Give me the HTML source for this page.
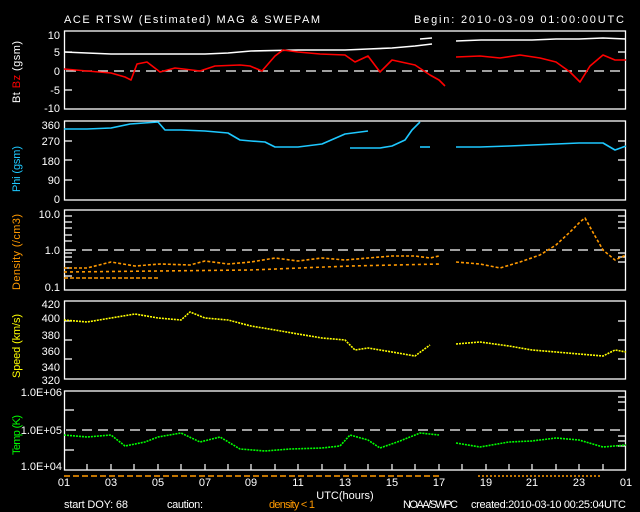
<!DOCTYPE html>
<html><head><style>
body{margin:0;background:#000;width:640px;height:512px;overflow:hidden}
svg{display:block}
text{font-family:"Liberation Sans",sans-serif;font-size:11px;fill:#fff}
</style></head><body>
<svg width="640" height="512" viewBox="0 0 640 512">
<text x="64" y="23" font-size="13" textLength="256">ACE RTSW (Estimated) MAG &amp; SWEPAM</text>
<text x="414" y="23" font-size="13" textLength="210">Begin: 2010-03-09 01:00:00UTC</text>
<g fill="none" stroke="#fff" stroke-width="1.3">
<rect x="64.5" y="31" width="561" height="78"/>
<rect x="64.5" y="121" width="561" height="79"/>
<rect x="64.5" y="210" width="561" height="80"/>
<rect x="64.5" y="301" width="561" height="78"/>
<rect x="64.5" y="391" width="561" height="79"/>
</g>
<g stroke="#fff" stroke-dasharray="10 6" stroke-width="1.3">
<line x1="66" y1="71" x2="625" y2="71"/>
<line x1="66" y1="250" x2="625" y2="250"/>
<line x1="66" y1="430" x2="625" y2="430"/>
</g>
<g stroke="#fff" stroke-width="1.2">
<path d="M64 52h8M64 90h8M64 141h8M64 160h8M64 180h8M64 321h8M64 340h8M64 359h8M64 250h10M64 410h10M64 450h10M64 216h8M64 222h8M64 228h8M64 235h8M64 241h8M64 253h8M64 257h8M64 262h8M64 268h8M64 276h8"/>
<path d="M626 52h-8M626 90h-8M626 141h-8M626 160h-8M626 180h-8M626 321h-8M626 340h-8M626 359h-8M626 216h-8M626 222h-8M626 228h-8M626 253h-8M626 257h-8M626 262h-8M626 410h-8M626 402h-8M626 397h-8M626 436h-8M626 441h-8M626 446h-8"/>
<path d="M87 470v-6M111 470v-6M134 470v-6M158 470v-6M181 470v-6M205 470v-6M228 470v-6M251 470v-6M275 470v-6M298 470v-6M322 470v-6M345 470v-6M368 470v-6M392 470v-6M415 470v-6M439 470v-6M462 470v-6M486 470v-6M509 470v-6M532 470v-6M556 470v-6M579 470v-6M603 470v-6"/>
</g>
<g text-anchor="end">
<text x="60" y="39">10</text><text x="60" y="56">5</text><text x="60" y="75">0</text><text x="60" y="94">-5</text><text x="60" y="112">-10</text>
<text x="60" y="129">360</text><text x="60" y="145">270</text><text x="60" y="165">180</text><text x="60" y="184">90</text><text x="60" y="203">0</text>
<text x="60" y="218">10.0</text><text x="60" y="254">1.0</text><text x="60" y="291">0.1</text>
<text x="60" y="308">420</text><text x="60" y="322">400</text><text x="60" y="339">380</text><text x="60" y="355">360</text><text x="60" y="371">340</text><text x="60" y="384">320</text>
<text x="62" y="396" font-size="8">1.0E+06</text><text x="62" y="434" font-size="8">1.0E+05</text><text x="62" y="470" font-size="8">1.0E+04</text>
</g>
<g font-size="10">
<text transform="translate(20,103) rotate(-90)" textLength="62">Bt <tspan style="fill:#f00">Bz</tspan> (gsm)</text>
<text transform="translate(20,192) rotate(-90)" style="fill:#1ec8ff" textLength="46">Phi (gsm)</text>
<text transform="translate(20,290) rotate(-90)" style="fill:#ff9900" textLength="76">Density (/cm3)</text>
<text transform="translate(20,378) rotate(-90)" style="fill:#ffff00" textLength="64">Speed (km/s)</text>
<text transform="translate(20,455) rotate(-90)" style="fill:#00ff00" textLength="40">Temp (K)</text>
</g>
<g fill="none" stroke-width="1.6" stroke-linejoin="round">
<polyline stroke="#fff" points="64,52 87,53 111,54 158,54 205,54 228,53 251,51 298,50 345,50 368,49 392,48 415,46 432,44"/>
<polyline stroke="#fff" points="420,39 432,38"/>
<polyline stroke="#fff" points="456,41 481,40 532,40 556,39 579,39 603,38 626,39"/>
<polyline stroke="#f00" points="64,69 87,71 111,73 125,77 131,80 137,64 147,62 160,72 175,68 200,71 215,66 240,65 250,66 262,71 275,56 283,50 298,52 320,54 345,55 355,62 368,56 380,72 392,60 415,65 430,75 439,80 445,86"/>
<polyline stroke="#f00" points="456,57 480,56 500,58 520,55 540,58 556,62 570,72 580,82 590,66 603,55 615,60 626,60"/>
<polyline stroke="#1ec8ff" points="64,129 87,129 111,128 130,124 158,122 165,130 181,130 205,131 228,133 240,140 251,141 265,142 275,147 298,147 322,144 345,134 368,131"/>
<polyline stroke="#1ec8ff" points="350,148 380,148 392,146 405,140 412,130 420,122"/>
<polyline stroke="#1ec8ff" points="420,147 430,147"/>
<polyline stroke="#1ec8ff" points="456,147 480,147 509,146 532,145 556,144 579,143 603,143 615,150 626,146"/>
<polyline stroke="#ff9900" stroke-dasharray="3 2" points="64,268 87,268 111,262 135,266 160,264 190,265 205,261 228,264 251,262 275,258 298,261 322,258 345,260 368,258 392,256 415,256 430,258 439,256"/>
<polyline stroke="#ff9900" stroke-dasharray="4 2" points="64,278 160,278"/>
<polyline stroke="#ff9900" stroke-dasharray="3 3" points="64,272 250,270 300,268 350,266 440,264"/>
<polyline stroke="#ff9900" stroke-dasharray="3 2" points="456,262 480,264 500,268 520,262 540,255 556,245 570,232 580,222 585,218 595,236 603,250 615,260 626,255"/>
<polyline stroke="#ffff00" stroke-dasharray="2 1" points="64,320 87,322 111,318 135,314 158,318 181,320 190,312 205,318 228,320 251,326 275,330 298,334 322,338 345,340 355,350 368,348 392,352 415,356 430,345"/>
<polyline stroke="#ffff00" stroke-dasharray="2 1" points="456,344 480,342 509,346 532,350 556,352 579,354 603,356 615,350 626,352"/>
<polyline stroke="#00ff00" stroke-dasharray="2 1" points="64,435 87,437 111,435 125,446 145,442 158,437 181,433 200,442 220,437 240,449 265,451 290,449 322,448 340,446 350,435 368,440 380,448 400,441 420,433 439,435"/>
<polyline stroke="#00ff00" stroke-dasharray="2 1" points="456,443 480,447 509,442 532,441 556,438 579,440 603,447 626,445"/>
<line x1="64" y1="476" x2="440" y2="476" stroke="#ff9900" stroke-dasharray="6 3"/>
<line x1="478" y1="476" x2="600" y2="476" stroke="#ff9900" stroke-dasharray="2 2"/>
</g>
<g text-anchor="middle">
<text x="64" y="486">01</text><text x="111" y="486">03</text><text x="158" y="486">05</text><text x="205" y="486">07</text><text x="251" y="486">09</text><text x="298" y="486">11</text><text x="345" y="486">13</text><text x="392" y="486">15</text><text x="439" y="486">17</text><text x="486" y="486">19</text><text x="532" y="486">21</text><text x="579" y="486">23</text><text x="626" y="486">01</text>
<text x="345" y="499">UTC(hours)</text>
</g>
<g font-size="9">
<text x="64" y="508" textLength="64">start DOY:  68</text>
<text x="167" y="508" textLength="36">caution:</text>
<text x="269" y="508" style="fill:#ff9900" textLength="46">density &lt; 1</text>
<text x="403" y="508" textLength="55">NOAA/SWPC</text>
<text x="471" y="508" textLength="155">created:2010-03-10 00:25:04UTC</text>
</g>
</svg>
</body></html>
